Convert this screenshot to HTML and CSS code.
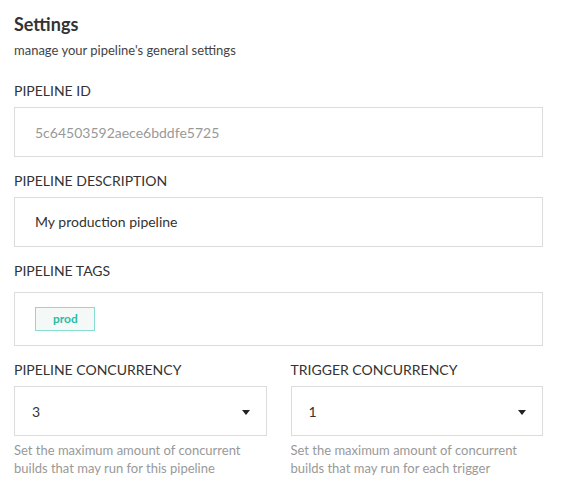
FILE: index.html
```html
<!DOCTYPE html>
<html>
<head>
<meta charset="utf-8">
<link rel="stylesheet" href="styles.css">
</head>
<body>
<div class="settings">
  <h1 class="title">Settings</h1>
  <p class="subtitle">manage your pipeline's general settings</p>

  <div class="field">
    <div class="label">PIPELINE ID</div>
    <div class="box"><span class="value muted">5c64503592aece6bddfe5725</span></div>
  </div>

  <div class="field">
    <div class="label">PIPELINE DESCRIPTION</div>
    <div class="box"><span class="value">My production pipeline</span></div>
  </div>

  <div class="field">
    <div class="label label-tags">PIPELINE TAGS</div>
    <div class="box tags"><span class="tag">prod</span></div>
  </div>

  <div class="row">
    <div class="field col">
      <div class="label">PIPELINE CONCURRENCY</div>
      <div class="box select"><span class="value num">3</span><span class="caret"></span></div>
      <div class="help">Set the maximum amount of concurrent builds that may run for this pipeline</div>
    </div>
    <div class="field col">
      <div class="label">TRIGGER CONCURRENCY</div>
      <div class="box select"><span class="value num">1</span><span class="caret"></span></div>
      <div class="help">Set the maximum amount of concurrent builds that may run for each trigger</div>
    </div>
  </div>
</div>
</body>
</html>
```
FILE: styles.css
```css
* { box-sizing: border-box; }
html, body { margin: 0; padding: 0; background: #fff; }
body { font-family: Lato, "Open Sans", sans-serif; color: #333; }
.settings { padding: 13px 26px 0 14px; }
.title { margin: 0; font-size: 18px; font-weight: 700; line-height: 22px; color: #333; }
.subtitle { margin: 6px 0 0; font-size: 13px; line-height: 18px; color: #444; }
.field { margin-top: 14px; }
.settings > .field:first-of-type { margin-top: 22px; }
.label { font-size: 14px; line-height: 20px; color: #333; margin-bottom: 6px; }
.label-tags { margin-bottom: 11px; }
.box { border: 1px solid #dcdcdc; height: 50px; display: flex; align-items: center; padding: 0 20px; background: #fff; }
.value { font-size: 14px; color: #333; margin-top: -2px; }
.muted { color: #999; margin-top: 0; }
.tags { height: 54px; }
.tag { display: inline-block; height: 24px; line-height: 22px; padding: 0 16px 0 17px; border: 1px solid #86dccf; background: #f4f8f7; color: #2bbca4; font-size: 12px; font-weight: 700; }
.row { display: flex; gap: 24px; }
.col { flex: 1; }
.select { justify-content: space-between; padding: 0 16px 0 17px; }
.num { margin-top: 0; }
.caret { width: 0; height: 0; border-left: 4.5px solid transparent; border-right: 4.5px solid transparent; border-top: 5px solid #222; margin-top: 2px; }
.help { margin-top: 5px; font-size: 13px; line-height: 18px; color: #999; padding-right: 20px; }
```
